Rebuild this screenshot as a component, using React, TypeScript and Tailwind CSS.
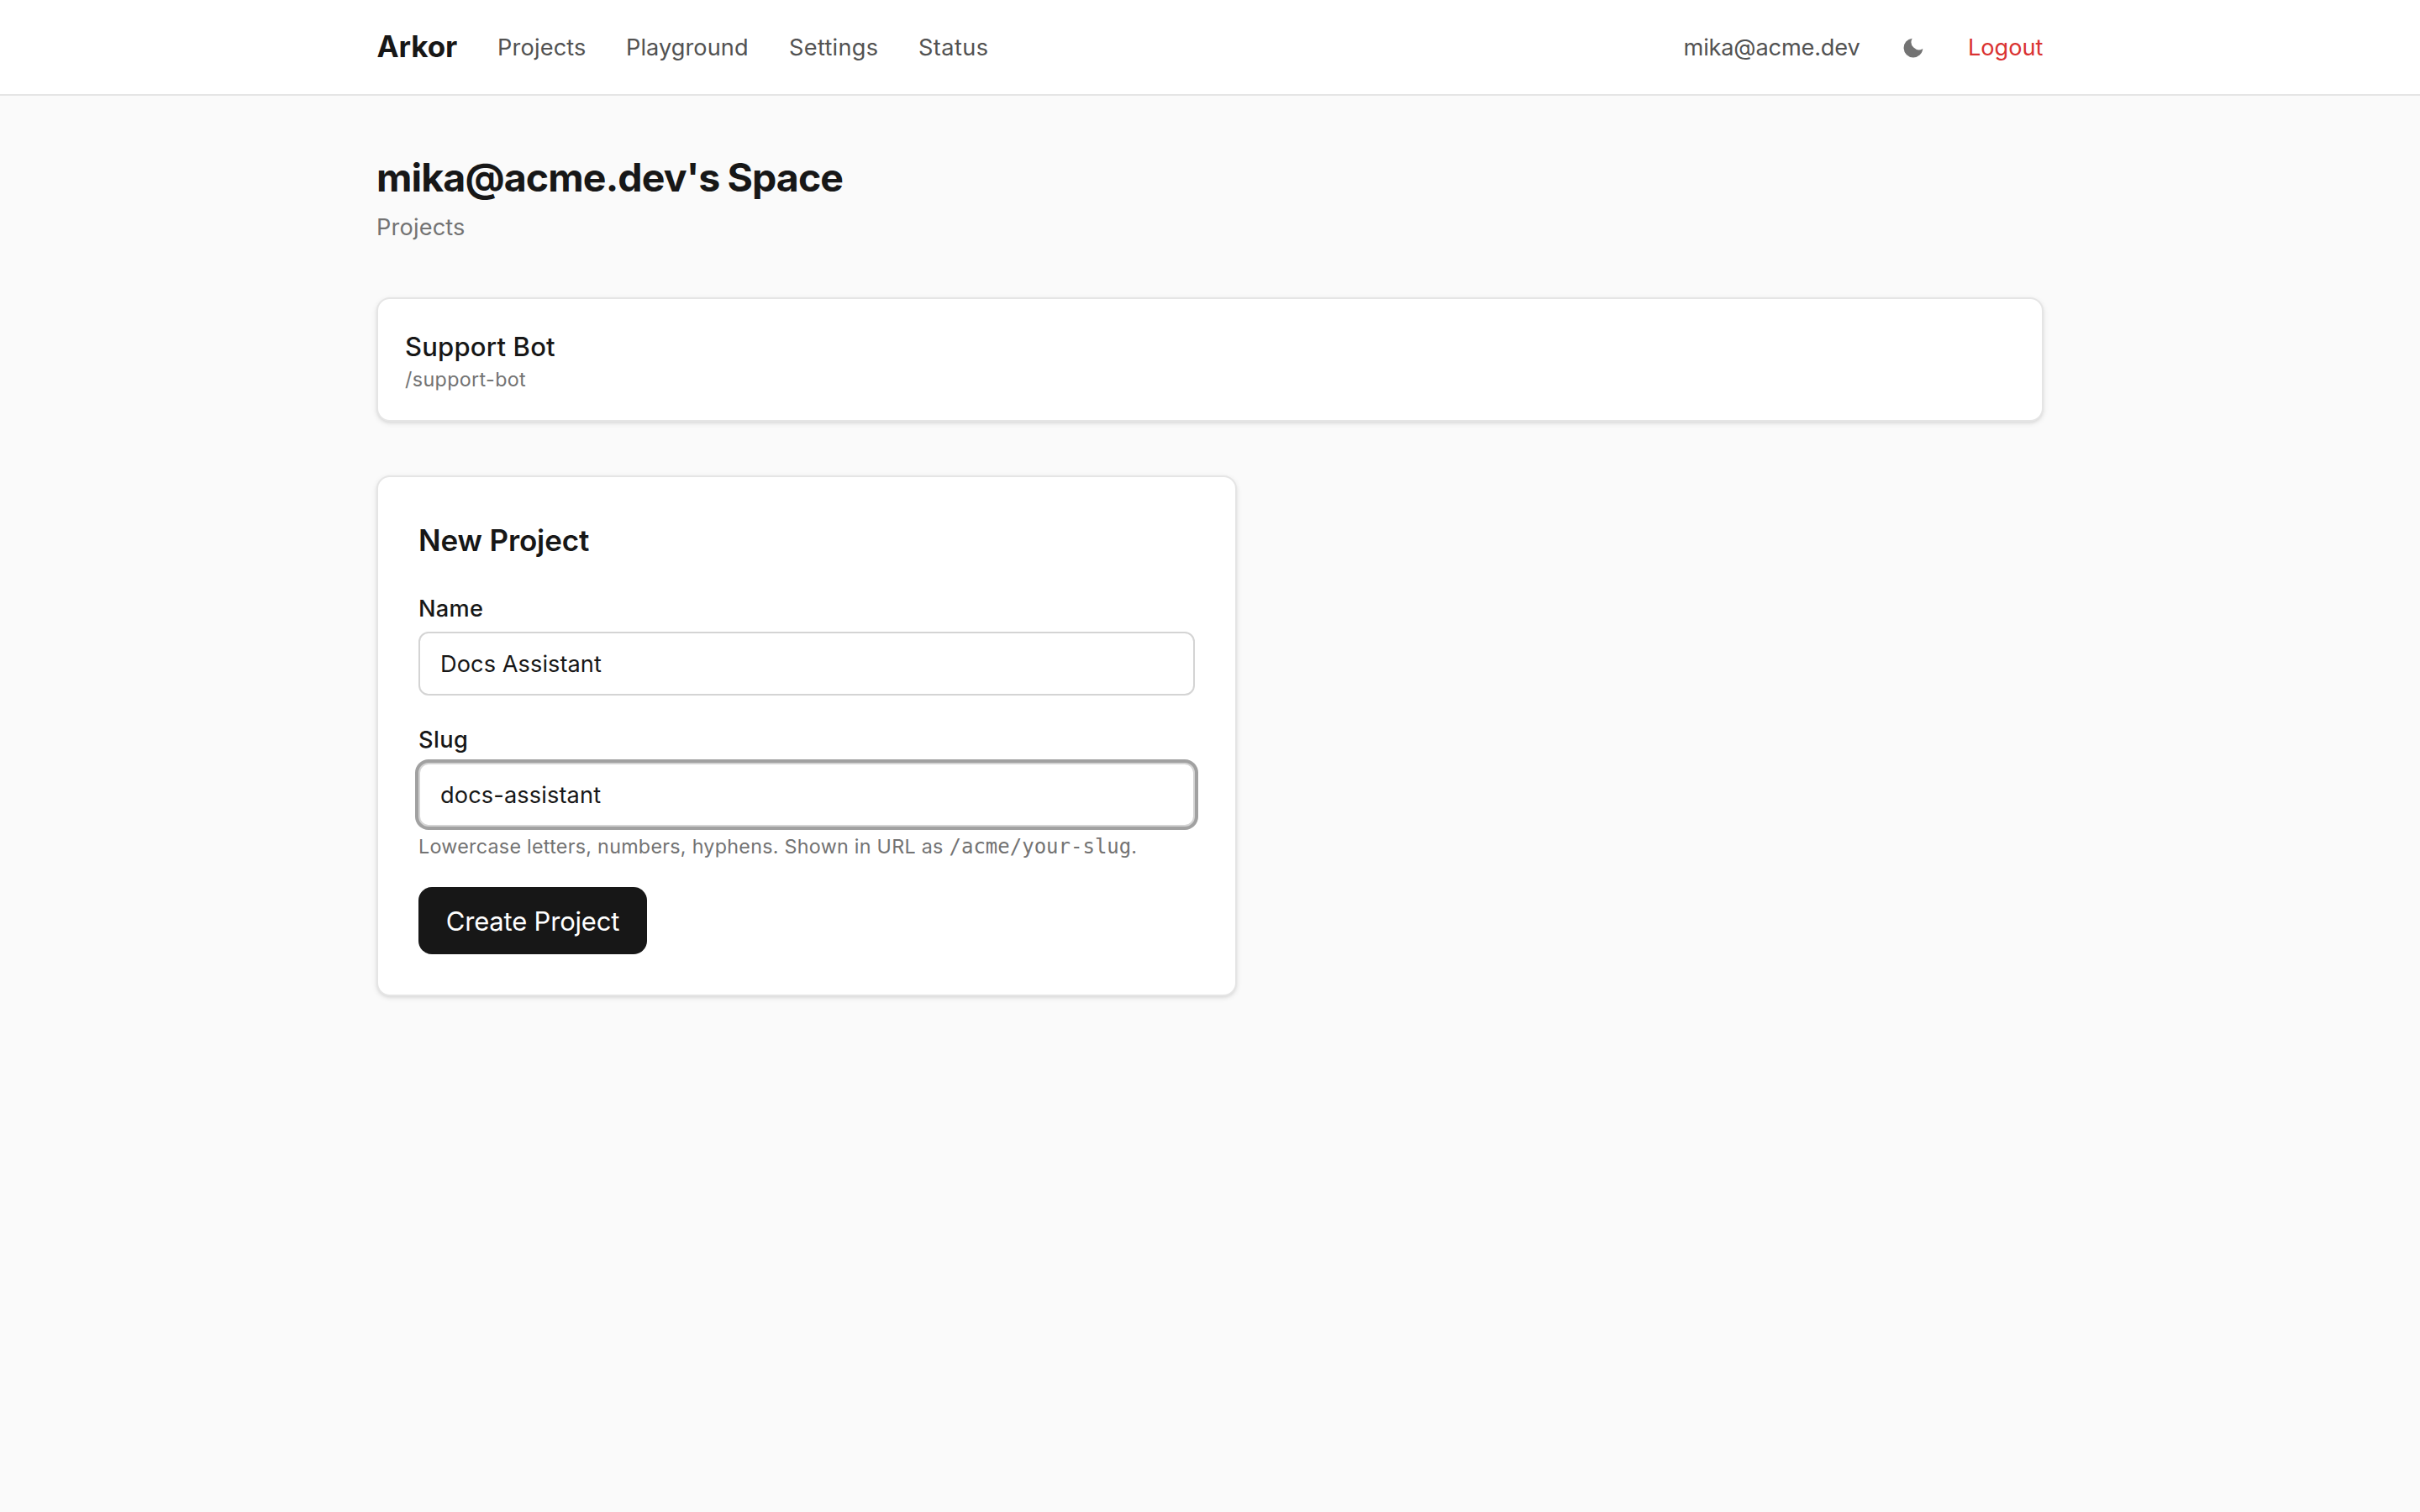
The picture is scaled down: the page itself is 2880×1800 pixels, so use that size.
import React, { useState } from "react";

const navItems = [
  { label: "Projects", className: "w-[105px] tracking-[0.15px]" },
  { label: "Playground", className: "w-[146px] tracking-[0.05px]" },
  { label: "Settings", className: "w-[106px] tracking-[0.3px]" },
  { label: "Status", className: "tracking-[0.4px]" },
];

const cardClass =
  "rounded-2xl border-2 border-[#e5e5e5] bg-white shadow-[0_2px_6px_0_rgba(0,0,0,0.1),0_2px_4px_-2px_rgba(0,0,0,0.1)]";
const inputClass =
  "block h-[76px] w-full rounded-xl border-2 border-[#d4d4d4] bg-white px-6 text-[27.2px] text-[#171717] outline-none";

function MoonIcon() {
  return (
    <svg viewBox="0 0 32 32" fill="currentColor" className="size-8">
      <path d="M13.67 5.67A11.4 11.4 0 1 0 26.33 18A9.2 9.2 0 0 1 13.67 5.67Z" />
    </svg>
  );
}

function Header() {
  return (
    <header className="h-[114px] border-b-2 border-[#e5e5e5] bg-white">
      <div className="mx-auto flex h-full w-[1984px] items-center justify-between text-[27.2px] leading-10 text-[#525252]">
        <nav className="flex items-center gap-12 whitespace-nowrap">
          <a className="w-24 pb-[3px] pl-[0.5px] text-[35px] leading-[56px] font-bold tracking-[-0.1px] text-[#171717]">
            Arkor
          </a>
          {navItems.map((item) => (
            <a key={item.label} className={`pt-0.5 ${item.className}`}>
              {item.label}
            </a>
          ))}
        </nav>
        <div className="flex items-center gap-12 whitespace-nowrap">
          <span className="w-[210.5px] pt-0.5 tracking-[-0.18px]">mika@acme.dev</span>
          <button className="size-8 text-[#737373]" aria-label="Toggle theme">
            <MoonIcon />
          </button>
          <button className="w-[90px] pt-0.5 text-left tracking-[-0.05px] text-[#da3232]">Logout</button>
        </div>
      </div>
    </header>
  );
}

function NewProjectForm() {
  const [name, setName] = useState("Docs Assistant");
  const [slug, setSlug] = useState("docs-assistant");
  return (
    <form className={`mt-16 w-[1024px] p-12 ${cardClass}`} onSubmit={(e) => e.preventDefault()}>
      <h2 className="h-14 text-[35px] leading-[54px] font-semibold tracking-[-0.12px]">New Project</h2>
      <label className="mt-8 block">
        <span className="mb-2 block h-10 text-[27.2px] leading-[42px] font-medium tracking-[0.28px]">Name</span>
        <input
          className={`${inputClass} tracking-[0.06px]`}
          value={name}
          onChange={(e) => setName(e.target.value)}
        />
      </label>
      <label className="mt-8 block">
        <span className="mb-2 block h-10 text-[27.2px] leading-[42px] font-medium tracking-[0.4px]">Slug</span>
        <input
          className={`${inputClass} tracking-[0.12px] ring-4 ring-[#a1a1a1]`}
          value={slug}
          onChange={(e) => setSlug(e.target.value)}
        />
      </label>
      <p className="mt-2 h-8 text-[23.3px] leading-8 tracking-[0.27px] whitespace-nowrap text-[#737373]">
        Lowercase letters, numbers, hyphens. Shown in URL as{" "}
        <code className="font-['DejaVu_Sans_Mono',monospace] text-[24px] leading-none tracking-normal">
          /acme/your-slug
        </code>
        .
      </p>
      <button className="mt-8 flex h-20 w-[272px] items-center justify-center rounded-2xl bg-[#171717] pt-0.5 text-[31px] tracking-[-0.2px] text-white">
        Create Project
      </button>
    </form>
  );
}

export default function App() {
  return (
    <div className="min-h-screen bg-[#fafafa] font-['Inter',sans-serif] text-[#171717]">
      <Header />
      <main className="mx-auto w-[1984px] pt-16">
        <h1 className="h-16 text-[46.5px] leading-[66px] font-bold tracking-[-0.9px] [word-spacing:-1px]">
          mika@acme.dev's Space
        </h1>
        <p className="mt-2 h-10 text-[27.2px] leading-[42px] tracking-[0.15px] text-[#737373]">Projects</p>
        <a className={`mt-16 block h-[148px] p-8 ${cardClass}`}>
          <div className="h-12 text-[31px] leading-[50px] font-medium tracking-[0.19px]">Support Bot</div>
          <div className="text-[23.3px] leading-8 tracking-[0.35px] text-[#737373]">/support-bot</div>
        </a>
        <NewProjectForm />
      </main>
    </div>
  );
}
